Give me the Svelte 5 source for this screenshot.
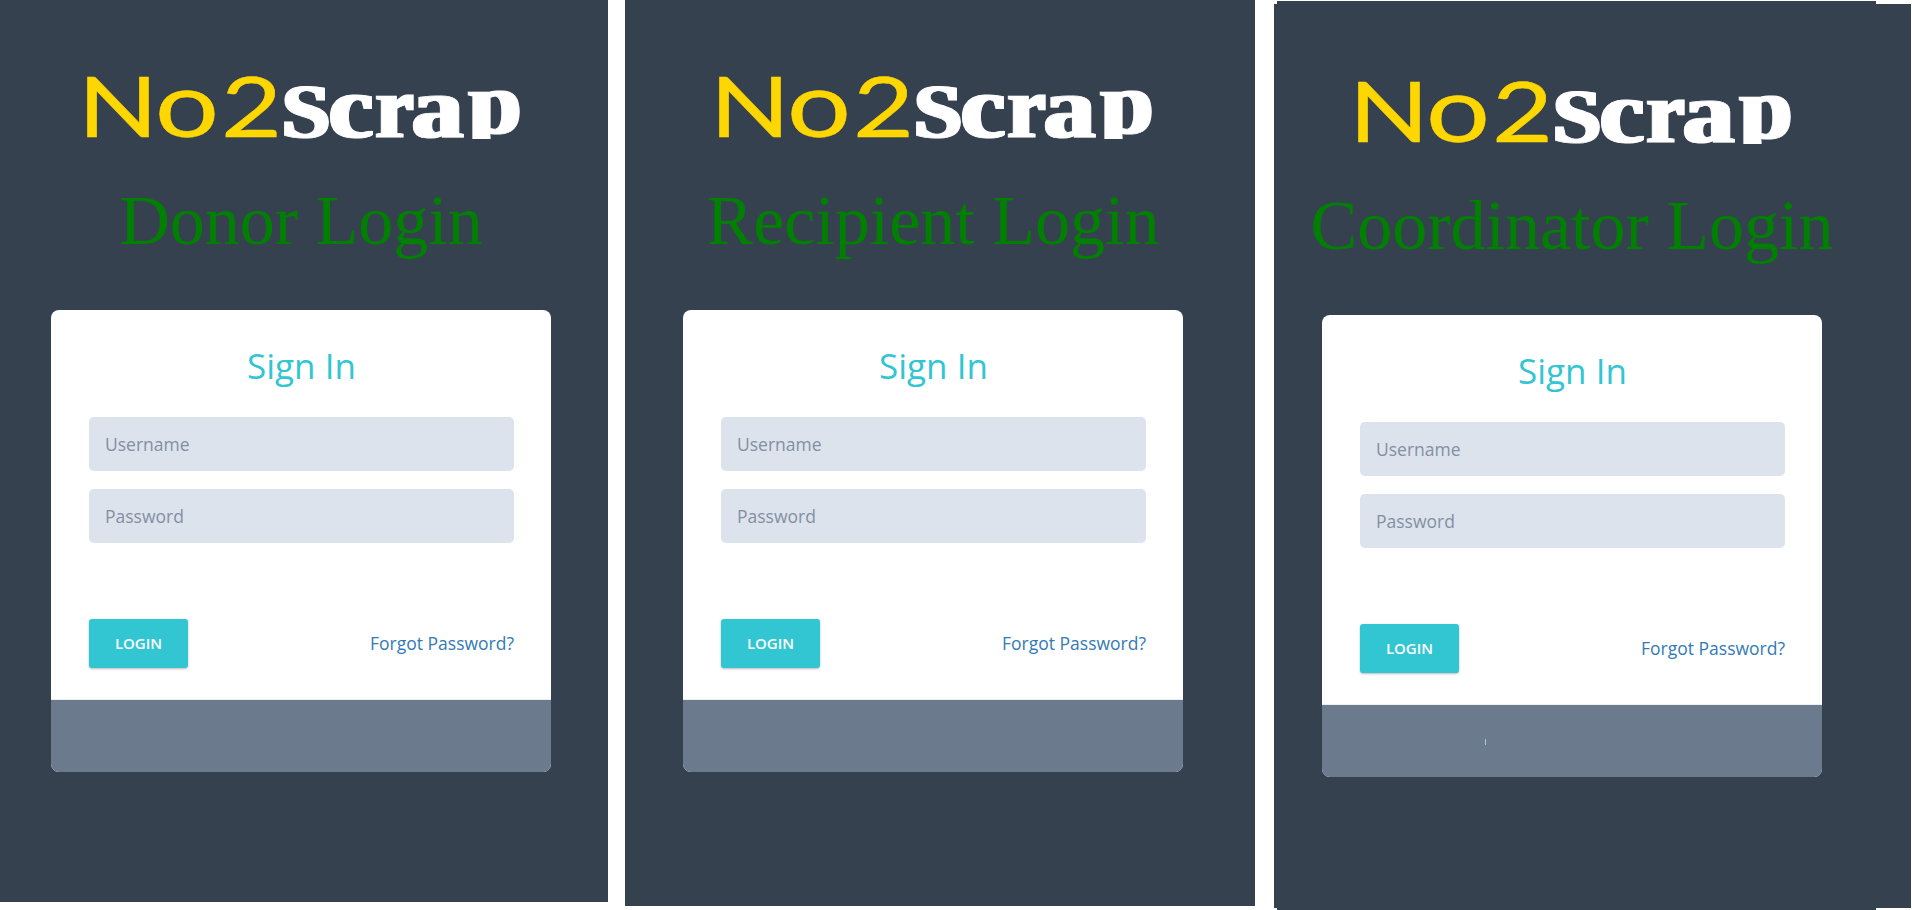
<script>
  const panels = [
    { id: 'donor', title: 'Donor Login' },
    { id: 'recipient', title: 'Recipient Login' },
    { id: 'coordinator', title: 'Coordinator Login' }
  ];
</script>

<main>
  {#each panels as panel (panel.id)}
    <section class="panel {panel.id}">
      <div class="content">
        <svg class="logo" viewBox="0 0 500 80" role="img" aria-label="No2Scrap">
          <defs>
            <clipPath id="line-{panel.id}"><rect x="0" y="0" width="500" height="69" /></clipPath>
            <filter id="heavy-{panel.id}" x="-5%" y="-5%" width="110%" height="110%">
              <feMorphology operator="dilate" radius="2 0" />
            </filter>
          </defs>
          <g class="no2">
            <text x="27" y="67" textLength="80" lengthAdjust="spacingAndGlyphs">N</text>
            <text x="104" y="67" textLength="64" lengthAdjust="spacingAndGlyphs" class="o">o</text>
            <text x="170" y="67" textLength="61" lengthAdjust="spacingAndGlyphs">2</text>
          </g>
          <g clip-path="url(#line-{panel.id})">
            <g class="scrap" filter="url(#heavy-{panel.id})">
              <text x="231" y="67" class="cap" textLength="48" lengthAdjust="spacingAndGlyphs">S</text>
              <text x="278" y="67" textLength="44" lengthAdjust="spacingAndGlyphs">c</text>
              <text x="325" y="67" textLength="37" lengthAdjust="spacingAndGlyphs">r</text>
              <text x="361" y="67" textLength="51" lengthAdjust="spacingAndGlyphs">a</text>
              <text x="418" y="63" textLength="52" lengthAdjust="spacingAndGlyphs">p</text>
            </g>
          </g>
        </svg>
        <h1>{panel.title}</h1>
        <form class="card" onsubmit={(e) => e.preventDefault()}>
          <div class="body">
            <h2>Sign In</h2>
            <input type="text" placeholder="Username" aria-label="Username" />
            <input type="password" placeholder="Password" aria-label="Password" />
            <div class="actions">
              <button type="submit">LOGIN</button>
              <a href="#forgot">Forgot Password?</a>
            </div>
          </div>
          <div class="foot">
            {#if panel.id === 'coordinator'}<span class="tick"></span>{/if}
          </div>
        </form>
      </div>
    </section>
  {/each}
</main>

<style>
  :global(body) { margin: 0; background: #fff; overflow: hidden; }
  main {
    display: flex;
    align-items: flex-start;
    width: 1912px;
    height: 910px;
    font-family: "Open Sans", sans-serif;
  }
  .panel { box-sizing: border-box; background: #364150; flex: none; }
  .donor { width: 608px; height: 902px; padding: 70px 0 0 51px; }
  .recipient { width: 630px; height: 906px; margin-left: 17px; padding: 70px 0 0 58px; }
  .coordinator {
    width: 637px;
    height: 910px;
    margin-left: 19px;
    padding: 75px 0 0 48px;
    background:
      linear-gradient(#364150, #364150) 3px 1px / 599px 909px no-repeat,
      linear-gradient(#364150, #364150) 0 4px / 637px 904px no-repeat;
  }
  .content { width: 500px; }
  .logo { display: block; width: 500px; height: 80px; overflow: visible; }
  .no2 { fill: #ffd700; stroke: #ffd700; stroke-width: .5px; font-family: Lato, sans-serif; font-size: 82.5px; }
  .no2 .o { font-size: 92px; }
  .scrap {
    fill: #fff;
    stroke: #fff;
    stroke-width: .8px;
    font-family: "Liberation Serif", serif;
    font-weight: 700;
    font-size: 88px;
  }
  .scrap .cap { font-size: 76px; }
  h1 {
    display: flex;
    justify-content: center;
    margin: 31px 0 49px;
    height: 80px;
    white-space: nowrap;
    font: 400 70px/80px "Liberation Serif", serif;
    color: #008000;
  }
  .card { width: 500px; border-radius: 8px; overflow: hidden; background: #fff; }
  .body {
    box-sizing: border-box;
    height: 390px;
    padding: 32px 37px 0 38px;
    border-bottom: 1px solid #eceef1;
  }
  h2 {
    margin: 0 0 27px;
    height: 48px;
    font-size: 35px;
    line-height: 48px;
    font-weight: 400;
    text-align: center;
    color: #32c5d2;
  }
  input {
    display: block;
    box-sizing: border-box;
    width: 425px;
    height: 54px;
    margin: 0 0 18px;
    padding: 0 16px;
    border: 0;
    border-radius: 5px;
    background: #dde3ec;
    font: 400 17.5px "Open Sans", sans-serif;
  }
  input::placeholder { color: #8290a3; opacity: 1; }
  .actions {
    display: flex;
    align-items: center;
    justify-content: space-between;
    margin-top: 76px;
    height: 49px;
  }
  button {
    width: 99px;
    height: 49px;
    padding: 0 0 2px;
    border: 0;
    border-radius: 3px;
    background: #32c5d2;
    color: #fff;
    font: 600 15px "Open Sans", sans-serif;
    box-shadow: 0 1px 3px rgba(0, 0, 0, .1), 0 1px 2px rgba(0, 0, 0, .18);
  }
  a { padding-bottom: 2px; color: #337ab7; font-size: 17.5px; text-decoration: none; }
  .foot { box-sizing: border-box; height: 72px; padding: 34px 0 0 163px; background: #6c7a8d; }
  .tick { display: block; width: 1px; height: 6px; background: #a9c9ec; }
</style>
